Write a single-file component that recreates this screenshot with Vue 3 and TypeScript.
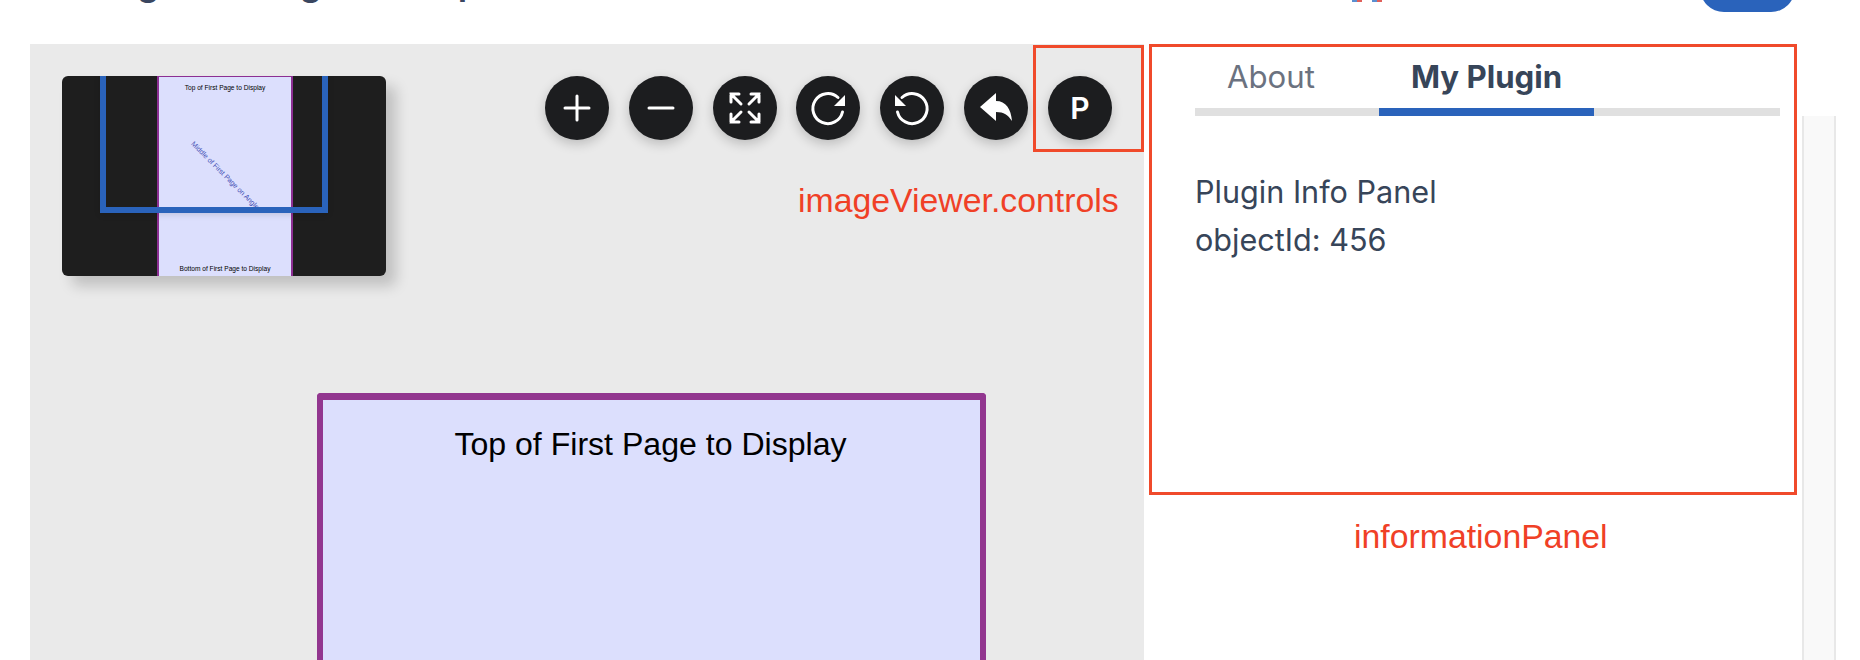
<script setup lang="ts">
interface Control {
  id: string
  label?: string
  paths?: { d: string; fill?: boolean }[]
}

const controls: Control[] = [
  { id: 'zoom-in', paths: [{ d: 'M16 4V28M4 16H28' }] },
  { id: 'zoom-out', paths: [{ d: 'M4 16H28' }] },
  {
    id: 'fit',
    paths: [
      { d: 'M2 10V2H10M2 2L12 12M22 2H30V10M30 2L20 12M2 22V30H10M2 30L12 20M22 30H30V22M30 30L20 20' }
    ]
  },
  {
    id: 'rotate-right',
    paths: [
      { d: 'M30.5 20A15 15 0 1 1 26 5.5' },
      { d: 'M33 3V14H22Z', fill: true }
    ]
  },
  {
    id: 'rotate-left',
    paths: [
      { d: 'M1.5 20A15 15 0 1 0 6 5.5' },
      { d: 'M-1 3V14H10Z', fill: true }
    ]
  },
  {
    id: 'reset',
    paths: [{ d: 'M0 15L16 1V9C26 9 31 17 32 29C28 23 24 20 16 20V29Z', fill: true }]
  },
  { id: 'plugin', label: 'P' }
]
</script>

<template>
  <div class="page">
    <header class="header">
      <h1 class="title">Adding The Plugin Example</h1>
      <div class="flags">
        <span class="flag"></span>
        <span class="flag"></span>
      </div>
      <div class="account"></div>
    </header>

    <main class="main">
      <section class="viewer">
        <div class="viewer-top">
          <div class="thumbnail">
            <div class="mini-page">
              <span>Top of First Page to Display</span>
              <span>Bottom of First Page to Display</span>
            </div>
            <div class="mini-clip">
              <span class="mini-angle">Middle of First Page on Angle</span>
            </div>
            <div class="viewport"></div>
          </div>
          <div class="controls">
            <button v-for="c in controls" :key="c.id" class="control" type="button">
              <span v-if="c.label" class="control-letter">{{ c.label }}</span>
              <svg v-else class="control-icon" viewBox="0 0 32 32" width="32" height="32">
                <path
                  v-for="(p, i) in c.paths"
                  :key="i"
                  :d="p.d"
                  :class="p.fill ? 'icon-fill' : 'icon-stroke'"
                />
              </svg>
            </button>
          </div>
        </div>
        <div class="doc-page">
          <p class="doc-text">Top of First Page to Display</p>
        </div>
      </section>

      <aside class="side">
        <nav class="tabs">
          <span class="tab">About</span>
          <span class="tab tab-active">My Plugin</span>
        </nav>
        <div class="panel-body">
          <p>Plugin Info Panel</p>
          <p>objectId: 456</p>
        </div>
      </aside>

      <div class="strip"></div>
    </main>

    <div class="callout callout-controls"></div>
    <div class="callout callout-panel"></div>
    <span class="callout-label label-controls">imageViewer.controls</span>
    <span class="callout-label label-panel">informationPanel</span>
  </div>
</template>

<style>
html,
body {
  margin: 0;
  background: #fff;
}
</style>

<style scoped>
.page {
  position: relative;
  width: 1860px;
  height: 660px;
  overflow: hidden;
  background: #fff;
  font-family: Inter, "Liberation Sans", sans-serif;
}

.header {
  position: relative;
  height: 44px;
  overflow: hidden;
}

.title {
  margin: -40px 0 0 35px;
  font-size: 36px;
  line-height: 44px;
  font-weight: 600;
  color: #3a4660;
  white-space: nowrap;
}

.flags {
  position: absolute;
  top: 0;
  left: 1352px;
  display: flex;
  gap: 10px;
}

.flag {
  width: 10px;
  height: 2px;
  background: linear-gradient(90deg, #5b8fd0 50%, #e0605a 50%);
}

.account {
  position: absolute;
  top: -40px;
  left: 1700px;
  width: 95px;
  height: 52px;
  border-radius: 24px;
  background: #2a63bb;
}

.main {
  display: flex;
  height: 616px;
}

.viewer {
  flex: none;
  width: 1114px;
  height: 616px;
  margin-left: 30px;
  box-sizing: border-box;
  padding: 32px 0 0 32px;
  overflow: hidden;
  background: #eaeaea;
}

.viewer-top {
  display: flex;
  align-items: flex-start;
}

.thumbnail {
  position: relative;
  flex: none;
  width: 324px;
  height: 200px;
  border-radius: 6px;
  background: #1e1e1e;
  box-shadow: 10px 10px 14px rgba(0, 0, 0, 0.18);
  overflow: hidden;
}

.mini-page {
  display: flex;
  flex-direction: column;
  justify-content: space-between;
  align-items: center;
  box-sizing: border-box;
  width: 136px;
  height: 200px;
  margin-left: 95px;
  padding: 6px 0 3px;
  border: solid #8c2f93;
  border-width: 1px 2px 0;
  background: #dcdffd;
  color: #000;
  font-family: "Liberation Sans", Arial, sans-serif;
  font-size: 6.6px;
  line-height: 9px;
  white-space: nowrap;
}

.mini-clip {
  position: absolute;
  left: 97px;
  top: 0;
  width: 132px;
  height: 131px;
  overflow: hidden;
}

.mini-angle {
  position: absolute;
  left: 36px;
  top: 64px;
  color: #434eb4;
  font-family: "Liberation Sans", Arial, sans-serif;
  font-size: 7.1px;
  line-height: 9px;
  white-space: nowrap;
  transform: rotate(45deg);
  transform-origin: 0 0;
}

.viewport {
  position: absolute;
  left: 38px;
  top: -20px;
  box-sizing: border-box;
  width: 228px;
  height: 157px;
  border: 6px solid #2a63bb;
  box-shadow: 0 2px 6px rgba(0, 0, 0, 0.12);
}

.controls {
  display: flex;
  gap: 19.83px;
  margin-left: 159px;
}

.control {
  display: flex;
  flex: none;
  align-items: center;
  justify-content: center;
  width: 64px;
  height: 64px;
  padding: 0;
  border: 0;
  border-radius: 50%;
  background: #1c1d1f;
  box-shadow: 0 4px 12px rgba(0, 0, 0, 0.2);
  color: #fff;
}

.control-icon {
  overflow: visible;
}

.control-letter {
  font-family: Inter, "Liberation Sans", sans-serif;
  font-size: 30px;
  font-weight: 600;
  line-height: 1;
}

.icon-stroke {
  fill: none;
  stroke: #fff;
  stroke-width: 3;
  stroke-linecap: round;
}

.icon-fill {
  fill: #fff;
}

.doc-page {
  box-sizing: border-box;
  width: 669px;
  height: 400px;
  margin: 117px 0 0 255px;
  padding-top: 26px;
  border: solid #92368f;
  border-width: 7px 6px 0;
  border-radius: 4px 4px 0 0;
  background: #dcdffd;
}

.doc-text {
  margin: 0 2px 0 0;
  color: #000;
  font-family: "Liberation Sans", Arial, sans-serif;
  font-size: 32.1px;
  line-height: 36px;
  text-align: center;
}

.side {
  flex: none;
  width: 658px;
  box-sizing: border-box;
  padding: 0 22px 0 51px;
}

.tabs {
  display: flex;
  gap: 32px;
  height: 64px;
  border-bottom: 8px solid #e0e0e0;
}

.tab {
  height: 64px;
  padding: 0 32px;
  color: #6b7280;
  font-size: 31.2px;
  line-height: 66px;
}

.tab-active {
  border-bottom: 8px solid #2a63bb;
  color: #374559;
  font-weight: 700;
}

.panel-body {
  padding: 52px 0 0;
  color: #374559;
  font-size: 30.6px;
  line-height: 48px;
}

.panel-body p {
  margin: 0;
}

.strip {
  flex: none;
  width: 30px;
  height: 544px;
  margin-top: 72px;
  border: solid #e8e8e8;
  border-width: 0 2px;
  background: #f9f9f9;
}

.callout {
  position: absolute;
  box-sizing: border-box;
  border: 3px solid #f04a2b;
}

.callout-controls {
  left: 1033px;
  top: 45px;
  width: 111px;
  height: 107px;
}

.callout-panel {
  left: 1149px;
  top: 44px;
  width: 648px;
  height: 451px;
}

.callout-label {
  position: absolute;
  color: #f04026;
  font-family: "Liberation Sans", Arial, sans-serif;
  font-size: 33.8px;
  line-height: 38px;
  white-space: nowrap;
}

.label-controls {
  left: 798px;
  top: 181px;
}

.label-panel {
  left: 1354px;
  top: 517px;
}
</style>
